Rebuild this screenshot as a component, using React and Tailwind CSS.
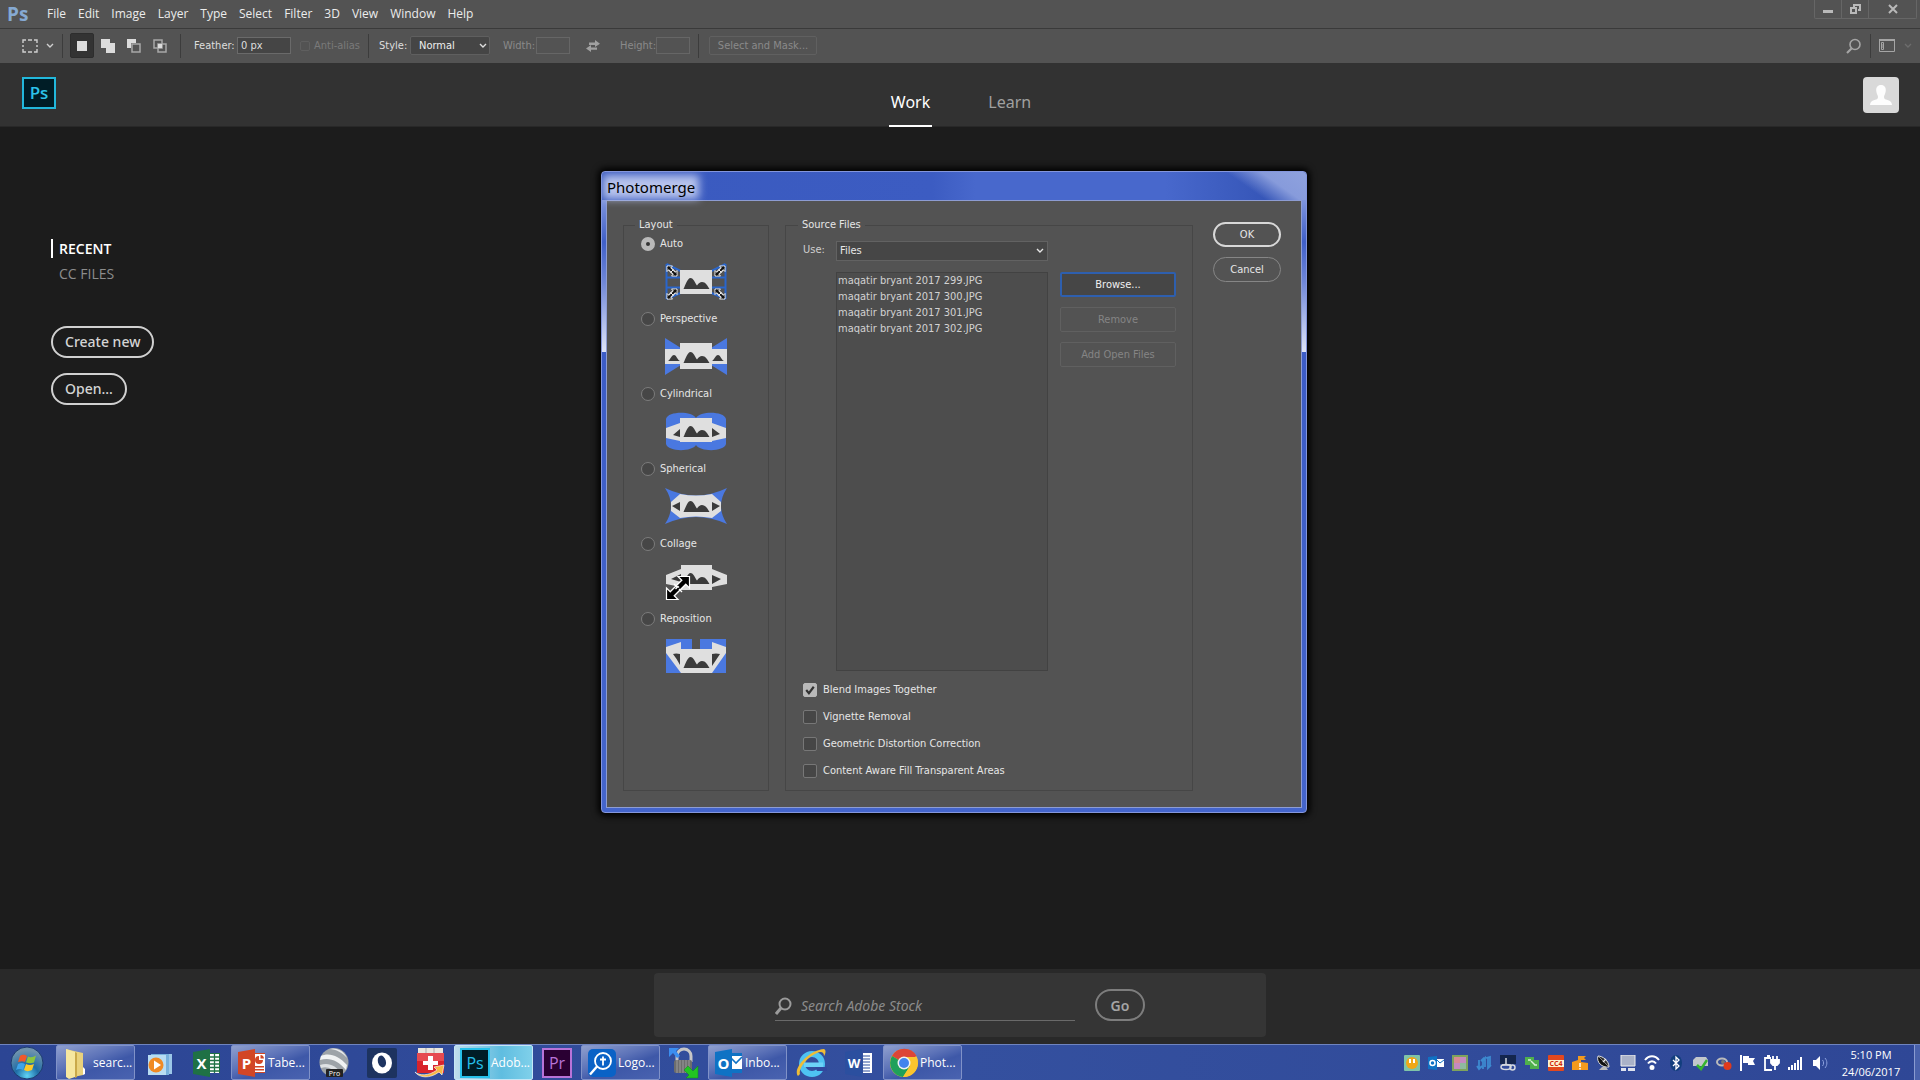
import React, { useState } from 'react'

const menus = ['File', 'Edit', 'Image', 'Layer', 'Type', 'Select', 'Filter', '3D', 'View', 'Window', 'Help']

const files = [
  'maqatir bryant 2017 299.JPG',
  'maqatir bryant 2017 300.JPG',
  'maqatir bryant 2017 301.JPG',
  'maqatir bryant 2017 302.JPG',
]

function Chevron({ className }) {
  return (
    <svg className={className} width="8" height="6" viewBox="0 0 8 6" fill="none" stroke="currentColor" strokeWidth="1.4">
      <path d="M1 1l3 3 3-3" />
    </svg>
  )
}

function Divider() {
  return <div className="w-px h-6 bg-[#3c3c3c]" />
}

/* ---------- photoshop chrome ---------- */

function MenuBar() {
  return (
    <header className="flex items-start justify-between h-[29px] bg-[#535353] border-b border-[#3a3a3a] font-['Open_Sans',sans-serif]">
      <div className="flex items-center h-7">
        <span className="w-[41px] pl-[7px] text-[19px] leading-7 font-bold text-[#85a9d2]">Ps</span>
        <nav className="flex">
          {menus.map((m) => (
            <button key={m} className="px-[6px] text-[12px] leading-7 text-[#ececec]">
              {m}
            </button>
          ))}
        </nav>
      </div>
      <div className="flex h-[19px] mr-[3px] border border-t-0 border-[#666] rounded-b-xs text-[#b9b9b9]">
        <button aria-label="Minimize" className="w-[27px] flex items-center justify-center border-r border-[#666]">
          <svg width="12" height="10" viewBox="0 0 12 10"><path d="M1 6h10v3H1z" fill="currentColor" /></svg>
        </button>
        <button aria-label="Restore" className="w-[27px] flex items-center justify-center border-r border-[#666]">
          <svg width="13" height="12" viewBox="0 0 13 12" fill="none" stroke="currentColor" strokeWidth="2">
            <path d="M5 4V2h6v5H9" />
            <path d="M2 5h5v5H2z" />
          </svg>
        </button>
        <button aria-label="Close" className="w-[47px] flex items-center justify-center">
          <svg width="10" height="10" viewBox="0 0 10 10" fill="none" stroke="currentColor" strokeWidth="2">
            <path d="M1 1l8 8M9 1L1 9" />
          </svg>
        </button>
      </div>
    </header>
  )
}

function OptionsBar() {
  return (
    <div className="flex items-center justify-between h-[34px] pr-2 pb-px bg-[#535353] text-[11px] leading-4 text-[#dedede] font-['DejaVu_Sans_Condensed','DejaVu_Sans',sans-serif]">
      <div className="flex items-center">
        <div className="flex items-center gap-2 pl-[22px] pr-2">
          <svg width="16" height="14" viewBox="0 0 16 14" fill="none" stroke="#d0d0d0" strokeWidth="1.4">
            <path d="M1 4V1h3M6 1h4M12 1h3v3M15 6v2M15 10v3h-3M10 13H6M4 13H1v-3M1 8V6" />
          </svg>
          <Chevron className="text-[#d0d0d0]" />
        </div>
        <Divider />
        <div className="flex items-center ml-[7px] gap-[2px]">
          <button aria-label="New selection" className="flex items-center justify-center w-6 h-[25px] rounded-xs bg-[#333] border border-[#2d2d2d]">
            <svg width="10" height="10" viewBox="0 0 10 10"><path d="M0 0h10v10H0z" fill="#dcdcdc" /></svg>
          </button>
          <button aria-label="Add to selection" className="flex items-center justify-center w-6 h-6">
            <svg width="14" height="14" viewBox="0 0 14 14"><path d="M0 0h9v4h5v10H5V9H0z" fill="#dcdcdc" /></svg>
          </button>
          <button aria-label="Subtract from selection" className="flex items-center justify-center w-6 h-6">
            <svg width="14" height="14" viewBox="0 0 14 14">
              <path d="M0 0h9v4H4v5H0z" fill="#dcdcdc" />
              <path d="M5 5h8v8H5z" fill="none" stroke="#a8a8a8" strokeWidth="1.5" />
            </svg>
          </button>
          <button aria-label="Intersect with selection" className="flex items-center justify-center w-6 h-6">
            <svg width="14" height="14" viewBox="0 0 14 14">
              <path d="M1 1h8v8H1zM5 5h8v8H5z" fill="none" stroke="#a8a8a8" strokeWidth="1.5" />
              <path d="M5 5h4v4H5z" fill="#dcdcdc" />
            </svg>
          </button>
        </div>
        <div className="ml-2">
          <Divider />
        </div>
        <label htmlFor="feather" className="ml-[13px] w-[43px]">Feather:</label>
        <input id="feather" defaultValue="0 px" className="w-[54px] h-[17px] px-[3px] bg-[#454545] border border-[#6a6a6a]" />
        <label className="flex items-center gap-1 ml-[9px] mr-2 text-[#7a7a7a]">
          <input type="checkbox" disabled className="appearance-none w-[10px] h-[10px] border border-[#5f5f5f] rounded-xs" />
          Anti-alias
        </label>
        <Divider />
        <label htmlFor="style" className="ml-[10px] w-[31px]">Style:</label>
        <div className="grid items-center w-20">
          <select id="style" className="col-start-1 row-start-1 appearance-none h-[19px] pl-2 bg-[#454545] border border-[#5f5f5f] rounded-xs text-[#eee]">
            <option>Normal</option>
          </select>
          <Chevron className="col-start-1 row-start-1 justify-self-end mr-[3px] pointer-events-none" />
        </div>
        <label htmlFor="w" className="ml-[13px] w-[33px] text-[#8a8a8a]">Width:</label>
        <input id="w" disabled className="w-[34px] h-[17px] border border-[#666]" />
        <svg className="mx-4" width="14" height="12" viewBox="0 0 14 12" fill="#a0a0a0">
          <path d="M3 2.500h6V0l5 3.700-5 3.400V5H3zM11 7.500H5V5L0 8.600 5 12V9.800h6z" />
        </svg>
        <label htmlFor="h" className="ml-1 w-9 text-[#8a8a8a]">Height:</label>
        <input id="h" disabled className="w-[34px] h-[17px] mr-2 border border-[#666]" />
        <Divider />
        <button disabled className="ml-[10px] w-[108px] h-[19px] border border-[#606060] rounded-xs text-[#8a8a8a]">
          Select and Mask...
        </button>
      </div>
      <div className="flex items-center gap-2 text-[#a5a5a5]">
        <button aria-label="Search">
          <svg width="16" height="16" viewBox="0 0 16 16" fill="none" stroke="currentColor" strokeWidth="1.600">
            <circle cx="9" cy="6.500" r="5" />
            <path d="M5.500 10.500L1 15" strokeWidth="2.200" />
          </svg>
        </button>
        <Divider />
        <button aria-label="Workspace" className="flex items-center gap-[9px]">
          <svg width="16" height="13" viewBox="0 0 16 13" fill="none" stroke="currentColor">
            <path d="M.5.5h15v12H.5z" />
            <path d="M0 1h16" strokeWidth="2" />
            <path d="M2.500 3.500h2v7h-2zM2 6h3M2 8h3" />
          </svg>
          <Chevron className="text-[#6d6d6d]" />
        </button>
      </div>
    </div>
  )
}

function StartHeader() {
  return (
    <div className="grid grid-cols-[1fr_auto_1fr] h-16 bg-[#323232] border-b border-[#282828] font-['Noto_Sans',sans-serif]">
      <div className="pl-[22px] pt-[14px]">
        <div className="flex items-center justify-center w-[34px] h-8 bg-[#001d26] border-2 border-[#22b8dc] text-[#2cc3ea] text-[17px] leading-5 font-semibold font-['Open_Sans',sans-serif]">
          Ps
        </div>
      </div>
      <nav className="flex gap-14 text-[16px] leading-6">
        <a href="#work" className="pt-[27px] px-[2px] h-16 border-b-2 border-white text-white">Work</a>
        <a href="#learn" className="pt-[27px] h-16 text-[#a0a0a0]">Learn</a>
      </nav>
      <div className="flex justify-end pr-[21px] pt-[14px]">
        <button aria-label="Account" className="w-9 h-9 rounded bg-[#d9d9d9]">
          <svg width="36" height="36" viewBox="0 0 36 36">
            <path d="M18 8c3.500 0 5 2.500 4.800 5.500-.2 3-1.600 4.800-1.800 6.200-.1 2 1 2.600 3.500 3.400 3 1 4.200 2 4.500 4.900H7c.3-3 1.500-3.900 4.500-4.900 2.500-.8 3.600-1.400 3.500-3.400-.2-1.400-1.600-3.200-1.800-6.200C13 10.500 14.500 8 18 8z" fill="#fdfdfd" />
          </svg>
        </button>
      </div>
    </div>
  )
}

function StartPanel() {
  return (
    <main className="flex-1 pl-[51px] pt-28 text-[14px] leading-[19px]">
      <ul className="flex flex-col gap-[6px] font-['Open_Sans',sans-serif]">
        <li>
          <a href="#recent" className="block pl-[6px] border-l-2 border-white font-semibold text-white">RECENT</a>
        </li>
        <li>
          <a href="#cc" className="block pl-2 font-medium text-[#8c8c8c]">CC FILES</a>
        </li>
      </ul>
      <div className="flex flex-col items-start gap-[15px] mt-[43px] font-['Noto_Sans',sans-serif]">
        <button className="h-8 px-3 pb-px border-2 border-[#d0d0d0] rounded-full font-medium text-[#d4d4d4]">Create new</button>
        <button className="h-8 px-3 pb-px border-2 border-[#d0d0d0] rounded-full font-medium text-[#d4d4d4]">Open...</button>
      </div>
    </main>
  )
}

function StockSearch() {
  return (
    <footer className="flex justify-center h-[75px] pt-1 bg-[#292929] font-['Noto_Sans',sans-serif]">
      <form className="flex items-start w-[612px] h-16 pl-[121px] pt-4 rounded bg-[#353535]">
        <div className="flex items-center gap-2 w-[300px] h-8 pt-[3px] border-b border-[#6a6a6a]">
          <svg width="18" height="18" viewBox="0 0 18 18" fill="none" stroke="#9b9b9b" strokeWidth="2">
            <circle cx="10" cy="7" r="5.500" />
            <path d="M6 11l-5 6" strokeWidth="3" />
          </svg>
          <input aria-label="Search Adobe Stock" placeholder="Search Adobe Stock" className="flex-1 min-w-0 bg-transparent text-[14px] leading-5 italic placeholder:text-[#8b8b8b]" />
        </div>
        <button type="button" className="ml-5 w-[50px] h-8 border-2 border-[#7d7d7d] rounded-full text-[14px] font-semibold text-[#a5a5a5]">
          Go
        </button>
      </form>
    </footer>
  )
}

/* ---------- photomerge dialog ---------- */

const WHITE = '#dfdfdf'
const BLUE = '#4a78e0'
const DARK = '#3b3b3b'

function Peaks({ y }) {
  return (
    <path
      transform={`translate(18.500 ${y})`}
      d="M0 11C2 7 4 0 7 0 10 0 11.500 5 13.500 7.500 15 5.500 16.500 4 18.500 4 22 4 24 7.500 26 11z"
      fill={DARK}
    />
  )
}

function ResizeArrow({ x, y, flip }) {
  return (
    <g transform={`translate(${x} ${y}) scale(${flip ? -1 : 1} 1)`}>
      <path d="M-3-3l6 6" stroke="#eee" strokeWidth="4.500" />
      <path d="M-5-5h5.500l-5.500 5.500zM5 5h-5.500l5.500-5.500z" fill="#111" stroke="#eee" strokeWidth="1" />
      <path d="M-4-4l8 8" stroke="#111" strokeWidth="2" />
      <path d="M-1.500 1.500l3-3" stroke="#eee" strokeWidth="1" />
    </g>
  )
}

function Thumb({ kind }) {
  return (
    <svg className="ml-[23px] overflow-visible shrink-0" width="63" height="37" viewBox="-1 0 63 37">
      {kind === 'auto' && (
        <>
          <path d="M1.500 1l14 7M1.500 36l14-6M1.500 1v35M1.500 14.500h14M1.500 24.500h14M60.500 1l-14 7M60.500 36l-14-6M60.500 1v35M60.500 14.500h-14M60.500 24.500h-14" stroke="#2a66cc" strokeWidth="2" />
          <path d="M15 7h32v24H15z" fill={WHITE} />
          <Peaks y={15} />
          <ResizeArrow x={7} y={8} />
          <ResizeArrow x={55} y={8} flip />
          <ResizeArrow x={7} y={31} flip />
          <ResizeArrow x={55} y={31} />
        </>
      )}
      {kind === 'perspective' && (
        <>
          <path d="M0 0l16 10v17L0 37zM62 0L46 10v17l16 10z" fill={BLUE} />
          <path d="M0 11h15V5h32v6h15v15H47v5H15v-5H0z" fill={WHITE} />
          <Peaks y={14} />
          <path d="M3 23c2-1 3.500-6 6-6s3.500 5 6 6zM47 23c2-1 3.500-6 6-6s3.500 5 6 6z" fill={DARK} />
        </>
      )}
      {kind === 'cylindrical' && (
        <>
          <path d="M1 6C3-2 27-2 31 5 35-2 59-2 61 6v25c-2 8-26 8-30 1-4 7-28 7-30-1z" fill={BLUE} />
          <path d="M1 15l14-5V5h32v5l14 5v10l-14 3v1H15v-1L1 25z" fill={WHITE} />
          <Peaks y={13} />
          <path d="M8 22l7-6v8zM47 15l8 6-8 3z" fill={DARK} />
        </>
      )}
      {kind === 'spherical' && (
        <>
          <path d="M0 0q31 15 62 0-12 18 0 36-31-14-62 0Q12 18 0 0z" fill={BLUE} />
          <path d="M6 14l9-8q16 3 32 0l9 8v9l-9 7q-16-3-32 0l-9-7z" fill={WHITE} />
          <Peaks y={13} />
          <path d="M7 18l8-4v9zM55 18l-8-4v9z" fill={DARK} />
        </>
      )}
      {kind === 'collage' && (
        <>
          <path d="M1 12l15-6V2h31v4l15 6v9l-15 3v3H16v-3L1 21z" fill={WHITE} />
          <Peaks y={10} />
          <path d="M6 16l10-5v8zM47 12l9 4-9 5z" fill={DARK} />
          {/* resize pointer */}
          <path d="M19 19L6 32" stroke="#fff" strokeWidth="7" />
          <path d="M13 13.500h11.500v11.500zM1.500 25v11.500H13z" fill="#000" stroke="#fff" strokeWidth="1.200" />
          <path d="M21 17L5 33" stroke="#000" strokeWidth="4.500" />
          <path d="M9 21l3 3M14 26l3 3M10.500 26l2.500-2.500 1 1" stroke="#fff" strokeWidth="1.400" fill="none" />
        </>
      )}
      {kind === 'reposition' && (
        <>
          <path d="M1 1h26v34H1zM35 1h26v34H35z" fill={BLUE} />
          <path d="M1 9l15-5v7h31V4l14 5v6L47 35H16L1 15z" fill={WHITE} />
          <Peaks y={19} />
          <path d="M8 16q3-1 7 0v11q-3-6-7-11zM55 16q-4-1-8 0v12q4-6 8-12z" fill={DARK} />
        </>
      )}
    </svg>
  )
}

const layouts = [
  ['auto', 'Auto'],
  ['perspective', 'Perspective'],
  ['cylindrical', 'Cylindrical'],
  ['spherical', 'Spherical'],
  ['collage', 'Collage'],
  ['reposition', 'Reposition'],
]

function CheckRow({ label, defaultChecked }) {
  const [on, setOn] = useState(!!defaultChecked)
  return (
    <label className="flex items-center gap-[6px] h-[14px]">
      <span className="grid">
        <input
          type="checkbox"
          checked={on}
          onChange={() => setOn(!on)}
          className="col-start-1 row-start-1 appearance-none w-[14px] h-[14px] rounded-xs bg-[#464646] border border-[#777] checked:bg-[#b9b9b9] checked:border-[#b9b9b9]"
        />
        {on && (
          <svg className="col-start-1 row-start-1 pointer-events-none" width="14" height="14" viewBox="0 0 13 13" fill="none" stroke="#333" strokeWidth="2">
            <path d="M3 6.500l2.500 3 4.500-6" />
          </svg>
        )}
      </span>
      {label}
    </label>
  )
}

function PhotomergeDialog() {
  const [layout, setLayout] = useState('auto')

  return (
    <div className="absolute inset-x-0 top-[171px] flex justify-center pr-3">
      <section
        role="dialog"
        aria-labelledby="dlg-title"
        className="w-[706px] border border-[#8496dc] rounded-[4px] shadow-[0_0_6px_3px_#000] overflow-hidden bg-[linear-gradient(to_bottom,#a9b8ea_0px,#3f5fc8_70px,#6f87d8_110px,#dfe5f8_180px,#3c5cc6_180px,#4465cc_100%)]"
      >
        <div className="flex items-center h-7 pl-[5px] pt-[2px] bg-[linear-gradient(215deg,#8fa2de_0px,#879bdb_26px,transparent_46px),linear-gradient(to_right,#3a5abf_0%,#3c5cc2_47%,#4868cc_53%,#4868cc_80%,#3656b8_94%)]">
          <h2 id="dlg-title" className="relative text-[15px] leading-6 text-black font-['Noto_Sans',sans-serif]">
            <span className="absolute -inset-x-1 inset-y-0 bg-[#b7c3ec] blur-[4px]" />
            <span className="relative">Photomerge</span>
          </h2>
        </div>

        <div className="mx-1 mb-1 p-4 flex gap-4 bg-[#535353] border border-[#8d9cd2] text-[11px] leading-4 text-[#e6e6e6] font-['DejaVu_Sans_Condensed','DejaVu_Sans',sans-serif]">
          <fieldset className="w-[146px] pl-[17px] pt-1 border border-[#464646]">
            <legend className="-ml-[6px] px-1">Layout</legend>
            <div className="flex flex-col gap-3">
              {layouts.map(([id, label]) => (
                <label key={id} className="flex flex-col gap-3">
                  <span className="flex items-center gap-[5px] h-[14px]">
                    <input
                      type="radio"
                      name="layout"
                      checked={layout === id}
                      onChange={() => setLayout(id)}
                      className="appearance-none w-[14px] h-[14px] rounded-full bg-[#464646] border border-[#7c7c7c] checked:border-[5px] checked:border-[#b9b9b9] checked:bg-[#333]"
                    />
                    {label}
                  </span>
                  <Thumb kind={id} />
                </label>
              ))}
            </div>
          </fieldset>

          <fieldset className="flex-1 pl-[17px] pr-4 pt-2 pb-3 border border-[#464646]">
            <legend className="-ml-[5px] px-1">Source Files</legend>
            <div className="grid grid-cols-[33px_1fr_128px] gap-y-[11px]">
              <label htmlFor="use" className="leading-[18px] text-[#cfcfcf]">Use:</label>
              <div className="grid items-center">
                <select id="use" className="col-start-1 row-start-1 appearance-none h-5 px-[3px] bg-[#464646] border border-[#626262]">
                  <option>Files</option>
                </select>
                <Chevron className="col-start-1 row-start-1 justify-self-end mr-1 pointer-events-none" />
              </div>
              <ul className="col-start-2 row-start-2 h-[399px] px-px bg-[#4d4d4d] border border-[#424242] text-[#d2d2d2]">
                {files.map((f) => (
                  <li key={f}>{f}</li>
                ))}
              </ul>
              <div className="col-start-3 row-start-2 flex flex-col gap-[10px] pl-3">
                <button className="h-[25px] rounded-xs bg-[#464646] border-2 border-[#2e5fae] text-[#f0f0f0]">Browse...</button>
                <button disabled className="h-[25px] rounded-xs border border-[#606060] text-[#858585]">Remove</button>
                <button disabled className="h-[25px] rounded-xs border border-[#606060] text-[#858585]">Add Open Files</button>
              </div>
            </div>
            <div className="flex flex-col items-start gap-[13px] mt-3">
              <CheckRow label="Blend Images Together" defaultChecked />
              <CheckRow label="Vignette Removal" />
              <CheckRow label="Geometric Distortion Correction" />
              <CheckRow label="Content Aware Fill Transparent Areas" />
            </div>
          </fieldset>

          <div className="flex flex-col gap-[10px] w-[72px] pl-1 pt-[5px] mr-1">
            <button className="h-[25px] border-2 border-[#d8d8d8] rounded-full">OK</button>
            <button className="h-[25px] border border-[#868686] rounded-full">Cancel</button>
          </div>
        </div>
      </section>
    </div>
  )
}

/* ---------- taskbar ---------- */

function Svg({ children, w = 32 }) {
  return <svg width={w} height={w} viewBox="0 0 32 32" className="shrink-0">{children}</svg>
}

const svgFont = "font-['Open_Sans',sans-serif]"

const Folder = () => (
  <Svg>
    <path d="M5 2l8 2 9 2v22L8 31 5 29z" fill="#e9d27c" />
    <path d="M5 2l9 3v25l-6 2-3-2z" fill="#f6e7a0" />
    <path d="M14 5l2 1v24l-2 1z" fill="#c9a94a" />
    <path d="M22 20l2 2v5l-2 1z" fill="#fff" />
  </Svg>
)

const MediaPlayer = () => (
  <Svg>
    <path d="M12 7h17v20H12z" fill="#9cc7e8" />
    <path d="M8 7h18v21H8z" fill="#78b0dc" />
    <path d="M5 8h18v20H5z" fill="#b8dcf2" />
    <circle cx="13" cy="18" r="7.500" fill="#f08a24" />
    <path d="M11 13.500l7 4.500-7 4.500z" fill="#fff" />
  </Svg>
)

function OfficeIcon({ letter, color, children }) {
  return (
    <Svg>
      <path d="M17 6h12v20H17z" fill={color} />
      {children}
      <path d="M2 5l17-3v28L2 27z" fill={color} />
      <text x="10.500" y="21.500" textAnchor="middle" fontSize="15" fontWeight="700" fill="#fff" className={svgFont}>{letter}</text>
    </Svg>
  )
}

const Excel = () => (
  <OfficeIcon letter="X" color="#1f7145">
    <path d="M19 7h9v19h-9z" fill="#fff" />
    <path d="M19 10h9M19 13.500h9M19 17h9M19 20.500h9M19 24h9M23.500 7v19" stroke="#1f7145" strokeWidth="1.300" />
  </OfficeIcon>
)

const PowerPoint = () => (
  <OfficeIcon letter="P" color="#d24625">
    <path d="M18 7h11v18H18z" fill="#fff" />
    <path d="M23 9a4 4 0 1 0 4 4h-4zM19 19h9v1.500h-9zM19 22h9v1.500h-9z" fill="#d24625" />
    <path d="M24.500 8v3.500H28A4 4 0 0 0 24.500 8z" fill="#d24625" />
  </OfficeIcon>
)

const Outlook = () => (
  <OfficeIcon letter="O" color="#0f72c4">
    <path d="M18 9h11v13H18z" fill="#fff" />
    <path d="M18 11l5 5 6-6" fill="none" stroke="#0f72c4" strokeWidth="1.600" />
  </OfficeIcon>
)

const Word = () => (
  <Svg>
    <path d="M2 5l17-3v28L2 27z" fill="#2b4f9f" />
    <path d="M20 6h9v20h-9z" fill="#fff" />
    <path d="M20 9h7M20 12h7M20 15h7M20 18h7M20 21h7M20 24h7" stroke="#2b4f9f" strokeWidth="1.200" />
    <text x="11" y="20.500" textAnchor="middle" fontSize="13" fontWeight="700" fill="#fff" className={svgFont}>W</text>
  </Svg>
)

const Earth = () => (
  <Svg>
    <circle cx="16" cy="15.500" r="14.500" fill="#9da3a8" />
    <path d="M3 9c8-4 18 0 26 9l-1 5C20 13 11 10 2 13z" fill="#f0f2f3" />
    <path d="M2 18c8-3 16 0 22 9l-4 3C15 21 9 19 3 21z" fill="#dfe2e4" />
    <path d="M11 2c7 0 14 4 18 9l-1-2C25 3 17 0 11 2z" fill="#e8eaec" />
    <rect x="8" y="22" width="17" height="8" rx="1" fill="#222" />
    <text x="16.500" y="28.500" textAnchor="middle" fontSize="7" fill="#fff" className={svgFont}>Pro</text>
  </Svg>
)

const OpenO = () => (
  <Svg>
    <rect x="1" y="1" width="30" height="30" rx="2" fill="#1d3360" />
    <ellipse cx="16" cy="16" rx="10" ry="10.500" fill="#fff" />
    <ellipse cx="16" cy="14.500" rx="4" ry="6" fill="#1d3360" transform="rotate(-15 16 15)" />
  </Svg>
)

const RedCross = () => (
  <Svg>
    <path d="M4 1h25v5H4z" fill="#e9e6de" />
    <path d="M12 1v5M20 1v5" stroke="#aaa" />
    <path d="M3 6h27v20H3z" fill="#d8232c" />
    <path d="M3 6h27v8H3z" fill="#e64a50" />
    <path d="M14 9h5v5h5v4h-5v5h-5v-5H9v-4h5z" fill="#fff" />
    <path d="M1 25c4 4 14 4 22-2l-3-3 10-2-2 10-3-3c-9 7-20 6-24 0z" fill="#f6b844" stroke="#fff" strokeWidth=".6" />
  </Svg>
)

const AdobeTile = ({ text, color, bg }) => (
  <Svg>
    <rect x="2" y="2" width="28" height="28" fill={bg} stroke={color} strokeWidth="2" />
    <text x="16" y="21.500" textAnchor="middle" fontSize="16" fontWeight="500" fill={color} className={svgFont}>{text}</text>
  </Svg>
)

const Logos = () => (
  <Svg>
    <rect x="2" y="2" width="28" height="28" rx="5" fill="#0a62c6" />
    <circle cx="17" cy="14" r="8" fill="none" stroke="#fff" strokeWidth="1.800" />
    <path d="M17 9.500v9M14 12.500h6" stroke="#fff" strokeWidth="1.800" />
    <path d="M11 19.500l-7 8" stroke="#fff" strokeWidth="2.400" />
  </Svg>
)

const Lock = () => (
  <Svg>
    <path d="M9 15V9a7 7 0 0 1 14 0v6" fill="none" stroke="#c6c6c6" strokeWidth="3" />
    <rect x="6" y="13" width="18" height="13" rx="2" fill="#6d6d6d" />
    <path d="M9 13v13M12 13v13M15 13v13M18 13v13M21 13v13" stroke="#9c9c9c" />
    <path d="M1 1h10L8 4l4 5-3 2-4-5-4 4z" fill="#3b8ef0" />
    <path d="M30 19v12H18l3-3-5-5 4-4 5 5z" fill="#22c522" stroke="#0d8a18" strokeWidth=".5" />
  </Svg>
)

const Explorer = () => (
  <Svg>
    <circle cx="17" cy="17" r="10" fill="none" stroke="#4ec3f2" strokeWidth="6" />
    <path d="M9 15.500h19v4.500H9z" fill="#6cd2f8" />
    <path d="M20 20h12v4H22z" fill="#31489d" />
    <path d="M3 29C-3 22 14 3 29 2c2 1 2 4 0 7 0-4-3-5-7-3C12 10 3 22 5 27z" fill="#efbd36" />
  </Svg>
)

const Chrome = () => (
  <Svg>
    <circle cx="16" cy="16" r="14" fill="#fbc52e" />
    <path d="M16 16L4 9a14 14 0 0 1 24.500 0z" fill="#dc4537" />
    <path d="M4 9a14 14 0 0 0 11 21l7-11-6-3z" fill="#1fa05a" />
    <path d="M15 30A14 14 0 0 0 28.500 10H16l6 9z" fill="#fbc52e" />
    <circle cx="16" cy="16" r="6.500" fill="#f1f1f1" />
    <circle cx="16" cy="16" r="5" fill="#4284ee" />
  </Svg>
)

const apps = [
  { name: 'Explorer', icon: <Folder />, label: 'searc...' },
  { name: 'Media Player', icon: <MediaPlayer /> },
  { name: 'Excel', icon: <Excel /> },
  { name: 'PowerPoint', icon: <PowerPoint />, label: 'Tabe...' },
  { name: 'Google Earth', icon: <Earth /> },
  { name: 'OpenO', icon: <OpenO /> },
  { name: 'First Aid', icon: <RedCross /> },
  { name: 'Photoshop', icon: <AdobeTile text="Ps" color="#26c0ea" bg="#001d26" />, label: 'Adob...', active: true },
  { name: 'Premiere', icon: <AdobeTile text="Pr" color="#b873d8" bg="#2a0033" /> },
  { name: 'Logos', icon: <Logos />, label: 'Logo...' },
  { name: 'Lock', icon: <Lock /> },
  { name: 'Outlook', icon: <Outlook />, label: 'Inbo...' },
  { name: 'Internet Explorer', icon: <Explorer /> },
  { name: 'Word', icon: <Word /> },
  { name: 'Chrome', icon: <Chrome />, label: 'Phot...' },
]

const tray = [
  <g key="0"><rect width="16" height="16" rx="1" fill="#7fc4a8" /><circle cx="8" cy="8" r="6" fill="#f0a818" /><path d="M6 4v4M10 4v4" stroke="#fff" strokeWidth="2" /></g>,
  <g key="1"><path d="M0 2l9-1v14l-9-1z" fill="#0f72c4" /><path d="M9 4h7v8H9z" fill="#fff" /><path d="M9 5l3 3 4-3" stroke="#0f72c4" fill="none" /><circle cx="4.500" cy="8" r="2.500" fill="none" stroke="#fff" strokeWidth="1.500" /></g>,
  <g key="2"><rect width="16" height="16" fill="#7fa35c" /><rect x="2" y="2" width="12" height="12" fill="#c58ac0" /><path d="M2 2h6v6H2z" fill="#d98b94" /><path d="M8 8h6v6H8z" fill="#8fb9a0" /></g>,
  <g key="3" fill="none" stroke="#3d8ad0" strokeWidth="1.800"><path d="M3 5v9M1 11l2 3 3-3M7 14V4l-2 2M9 12V3l-2 2M10 3l4-1v9M12 2v11l3-3" /></g>,
  <g key="4"><path d="M0 0h16v9H0z" fill="#14264e" /><path d="M6 3v7M2 10h9" stroke="#d4d8dd" strokeWidth="1.500" fill="none" /><ellipse cx="6" cy="12" rx="5" ry="2.500" fill="none" stroke="#d4d8dd" strokeWidth="1.500" /><circle cx="12.500" cy="12.500" r="2.500" fill="none" stroke="#d4d8dd" strokeWidth="1.500" /></g>,
  <g key="5"><path d="M1 2h9v3h5v9H6v-4H1z" fill="#4fb04c" /><path d="M4 5h3M7 6l4 4M10 10h3" stroke="#d9f2d7" strokeWidth="1.500" /></g>,
  <g key="6"><rect width="16" height="16" rx="1" fill="#e2481e" /><path d="M0 5h16v7H0z" fill="#fff2d0" /><text x="8" y="11" textAnchor="middle" fontSize="7" fontWeight="700" fill="#d0280c" className={svgFont}>CC4</text></g>,
  <g key="7"><path d="M0 7l6-2v-4h8l-2 2 2 2h-5v2l7 1v7H0z" fill="#f39a1d" /><path d="M8 8v4M8 13v1.500" stroke="#fff" strokeWidth="1.500" /></g>,
  <g key="8"><path d="M2 1c-2 6 4 12 11 11z" fill="#111" stroke="#ddd" /><path d="M2 1c5 0 11 5 11 11" fill="#333" stroke="#ddd" /><path d="M6 12l-3 3h9l-2-3" fill="#bbb" /><path d="M7 7l3-3" stroke="#eee" strokeWidth="1.500" /></g>,
  <g key="9"><path d="M1 0h14v11H1z" fill="#aab2c8" stroke="#eee" /><path d="M1 13h5v3H1zM8 13h7v3H8z" fill="#dfe3ee" /></g>,
  <g key="10" fill="none" stroke="#fff" strokeWidth="2"><path d="M1 5c4-5 10-5 14 0M4 8.500c2-3 6-3 8 0" /><circle cx="8" cy="12.500" r="1.500" fill="#fff" /></g>,
  <g key="11"><ellipse cx="8" cy="8" rx="6" ry="8" fill="#123e7e" /><path d="M5 5l6 6-3 3V2l3 3-6 6" fill="none" stroke="#fff" strokeWidth="1.300" /></g>,
  <g key="12"><path d="M1 5l3-3h10l2 3v6H1z" fill="#c2c7cc" /><path d="M5 10l4 4 6-9" stroke="#37b52f" strokeWidth="2.500" fill="none" /></g>,
  <g key="13"><ellipse cx="6" cy="7" rx="5" ry="3.500" fill="none" stroke="#bbb" strokeWidth="2" /><circle cx="7" cy="7" r="2" fill="#777" /><circle cx="11.500" cy="11" r="4" fill="#e03a1c" /></g>,
  <g key="14"><path d="M1 0v16" stroke="#fff" strokeWidth="2" /><path d="M3 1h6v2h6l-2 3 2 4H8V8H3z" fill="#fff" /></g>,
  <g key="15" fill="none" stroke="#fff" strokeWidth="1.800"><path d="M7 3H1v12h7M3 1h3" /><path d="M7 5h8v3l-2 2H9L7 8zM9 5V1M13 5V1M11 10v5" /><path d="M8 6h6v2l-1 1H9L8 8z" fill="#fff" /></g>,
  <g key="16" fill="#fff"><path d="M0 12h2v3H0zM3 10h2v5H3zM6 8h2v7H6zM9 5h2v10H9zM12 2h2v13h-2z" /></g>,
  <g key="17"><path d="M1 5h3l4-4v14l-4-4H1z" fill="#fff" /><path d="M10.500 5c1.500 2 1.500 4 0 6M13 3c2.500 3 2.500 7 0 10" stroke="#8ba0de" fill="none" /></g>,
]

function Taskbar() {
  return (
    <div className="flex justify-between h-9 bg-[linear-gradient(to_right,#2c4594,#34509f_50%,#2f4796)] border-t border-[#6f84bf] text-white text-[12px] leading-4 font-['Open_Sans',sans-serif]">
      <div className="flex">
        <button aria-label="Start" className="w-14 pl-[10px]">
          <svg width="34" height="34" viewBox="0 0 34 34">
            <defs>
              <radialGradient id="orb" cx=".5" cy=".9" r=".8">
                <stop offset="0" stopColor="#5fd4f5" />
                <stop offset=".45" stopColor="#1f6da6" />
                <stop offset="1" stopColor="#6f93ad" />
              </radialGradient>
            </defs>
            <circle cx="17" cy="17" r="16" fill="url(#orb)" stroke="#1c3b6e" />
            <path d="M10 10c3-2 5-1 7 0l-2 6c-2-1-4-1-7 0z" fill="#f0592a" />
            <path d="M18 10.500c2 1 5 1 8-1l-2 7c-3 1-5 1-8 0z" fill="#8cc63e" />
            <path d="M8 18c3-1.500 5-1 7 0l-2 6c-2-1.500-4-1.500-7 0z" fill="#3fa4e8" />
            <path d="M16 18c2 1 5 1.500 8 0l-2 6c-3 1.500-6 1.500-8 0z" fill="#fcc928" />
          </svg>
        </button>
        {apps.map((a) =>
          a.label ? (
            <button
              key={a.name}
              className={
                a.active
                  ? 'flex items-center w-[79px] pl-1 overflow-hidden border border-[#c5e6f6] rounded-xs bg-[linear-gradient(to_right,#c0dcec,#5fbde0_60%,#7fd0ea)]'
                  : 'flex items-center w-[79px] pl-1 overflow-hidden border border-[#8092c8] rounded-xs bg-[linear-gradient(160deg,#8f9fce_0%,#5d73b8_40%,#3e58a8_60%,#4a63b0)]'
              }
            >
              {a.icon}
              <span>{a.label}</span>
            </button>
          ) : (
            <button key={a.name} aria-label={a.name} className="w-12 flex items-center justify-center">
              {a.icon}
            </button>
          )
        )}
      </div>
      <div className="flex items-center">
        <div className="flex gap-2">
          {tray.map((g, i) => (
            <svg key={i} width="16" height="16" viewBox="0 0 16 16">{g}</svg>
          ))}
        </div>
        <div className="w-[86px] text-center text-[11px] leading-[17px]">
          <div>5:10 PM</div>
          <div>24/06/2017</div>
        </div>
        <button aria-label="Show desktop" className="w-[6px] h-full border-l border-[#8a9bd0] bg-[#4a62ac]" />
      </div>
    </div>
  )
}

function App() {
  return (
    <div className="relative flex flex-col min-h-screen bg-[#1c1c1c] font-['Noto_Sans',sans-serif]">
      <MenuBar />
      <OptionsBar />
      <StartHeader />
      <StartPanel />
      <StockSearch />
      <Taskbar />
      <PhotomergeDialog />
    </div>
  )
}

export default App
